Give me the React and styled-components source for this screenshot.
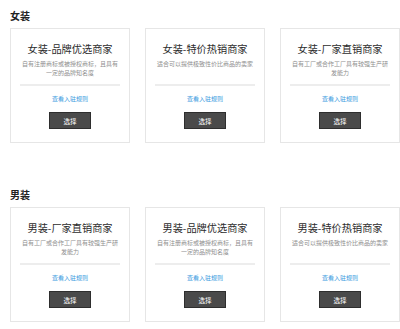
import React from 'react';
import styled, { createGlobalStyle } from 'styled-components';

const GlobalStyle = createGlobalStyle`
  body {
    margin: 0;
    background: #fff;
    font-family: "Noto Sans CJK SC", "Noto Sans", sans-serif;
  }
`;

const Page = styled.div`
  width: 400px;
  padding: 6px 0 0 10px;
  box-sizing: border-box;
`;

const Section = styled.section`
  & + & {
    margin-top: 42px;
  }
`;

const SectionTitle = styled.h2`
  margin: 0 0 2px;
  font-size: 10px;
  line-height: 20px;
  font-weight: 700;
  color: #222;
`;

const CardGrid = styled.div`
  display: grid;
  grid-template-columns: repeat(3, 120px);
  column-gap: 15px;
`;

const Card = styled.div`
  border: 1px solid #e6e6e6;
  padding: 13px 9px 13px;
  display: flex;
  flex-direction: column;
  align-items: center;
  text-align: center;
`;

const Title = styled.h3`
  margin: 0;
  font-size: 10.2px;
  line-height: 14px;
  font-weight: 400;
  color: #2c2c2c;
  white-space: nowrap;
`;

const Desc = styled.p`
  margin: 2.5px 0 0;
  height: 18px;
  font-size: 6px;
  line-height: 9px;
  color: #8e8e8e;
`;

const Divider = styled.div`
  align-self: stretch;
  height: 2px;
  margin-top: 7.5px;
  background: #ededed;
`;

const RuleLink = styled.a`
  margin-top: 8px;
  font-size: 6px;
  line-height: 10px;
  color: #3b9be0;
  text-decoration: none;
`;

const SelectButton = styled.button`
  margin-top: 8px;
  width: 42px;
  height: 17px;
  padding: 0;
  background: #4a4a4a;
  border: 1px solid #2e2e2e;
  color: #fff;
  font-family: inherit;
  font-size: 6.5px;
  cursor: pointer;
`;

const sections = [
  {
    name: '女装',
    shops: [
      { title: '女装-品牌优选商家', desc: '自有注册商标或被授权商标，且具有一定的品牌知名度' },
      { title: '女装-特价热销商家', desc: '适合可以提供极致性价比商品的卖家' },
      { title: '女装-厂家直销商家', desc: '自有工厂或合作工厂具有较强生产研发能力' },
    ],
  },
  {
    name: '男装',
    shops: [
      { title: '男装-厂家直销商家', desc: '自有工厂或合作工厂具有较强生产研发能力' },
      { title: '男装-品牌优选商家', desc: '自有注册商标或被授权商标，且具有一定的品牌知名度' },
      { title: '男装-特价热销商家', desc: '适合可以提供极致性价比商品的卖家' },
    ],
  },
];

const App = () => (
  <>
    <GlobalStyle />
    <Page>
      {sections.map((section) => (
        <Section key={section.name}>
          <SectionTitle>{section.name}</SectionTitle>
          <CardGrid>
            {section.shops.map((shop) => (
              <Card key={shop.title}>
                <Title>{shop.title}</Title>
                <Desc>{shop.desc}</Desc>
                <Divider />
                <RuleLink href="#">查看入驻规则</RuleLink>
                <SelectButton>选择</SelectButton>
              </Card>
            ))}
          </CardGrid>
        </Section>
      ))}
    </Page>
  </>
);

export default App;
